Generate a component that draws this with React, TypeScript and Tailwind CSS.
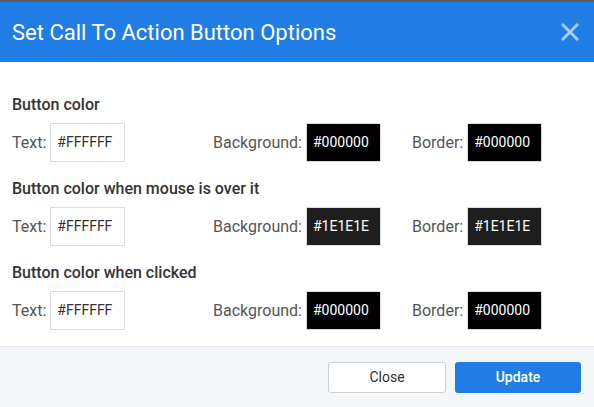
const font = { fontFamily: 'Roboto, "Liberation Sans", sans-serif' };

type Swatch = { value: string; bg?: string };

const ColorInput = ({ value, bg }: { value: string; bg?: string }) => (
  <div
    className={`flex h-[39px] w-[75px] items-center border border-[#dcdcdc] pl-[6px] text-[14px] ${
      bg ? 'text-white' : 'bg-white text-[#333]'
    }`}
    style={bg ? { backgroundColor: bg } : undefined}
  >
    {value}
  </div>
);

const Field = ({ label, swatch }: { label: string; swatch: Swatch }) => (
  <div className="flex items-center gap-[4px]">
    <span className="text-[16px] text-[#555]">{label}</span>
    <ColorInput value={swatch.value} bg={swatch.bg} />
  </div>
);

const sections: { title: string; bg: string; border: string }[] = [
  { title: 'Button color', bg: '#000000', border: '#000000' },
  { title: 'Button color when mouse is over it', bg: '#1E1E1E', border: '#1E1E1E' },
  { title: 'Button color when clicked', bg: '#000000', border: '#000000' },
];

export default function App() {
  return (
    <div className="flex h-[407px] w-[594px] flex-col overflow-hidden bg-white" style={font}>
      <div className="h-[2px] bg-[#5c5c5c]" />
      <div className="flex h-[60px] items-center justify-between bg-[#217de6] pl-[12px] pr-[15px]">
        <h1 className="text-[22px] text-white">Set Call To Action Button Options</h1>
        <svg width="18" height="18" viewBox="0 0 18 18" className="text-white/60">
          <path d="M2 2L16 16M16 2L2 16" stroke="currentColor" strokeWidth="3" strokeLinecap="square" />
        </svg>
      </div>
      <div className="flex flex-1 flex-col gap-[17px] px-[12px] pt-[33px]">
        {sections.map((s) => (
          <div key={s.title} className="flex flex-col gap-[8px]">
            <div className="h-[20px] text-[16px] font-medium leading-[20px] text-[#333]">{s.title}</div>
            <div className="grid grid-cols-[201px_199px_1fr]">
              <Field label="Text:" swatch={{ value: '#FFFFFF' }} />
              <Field label="Background:" swatch={{ value: s.bg, bg: s.bg }} />
              <Field label="Border:" swatch={{ value: s.border, bg: s.border }} />
            </div>
          </div>
        ))}
      </div>
      <div className="flex h-[61px] justify-end gap-[9px] border-t border-[#e3e7ec] bg-[#f4f7fa] pr-[13px] pt-[15px]">
        <button className="h-[31px] w-[118px] rounded-[3px] border border-[#cfcfcf] bg-white text-[14px] text-[#333]">
          Close
        </button>
        <button className="h-[31px] w-[126px] rounded-[3px] bg-[#217de6] text-[14px] font-medium text-white">
          Update
        </button>
      </div>
    </div>
  );
}
